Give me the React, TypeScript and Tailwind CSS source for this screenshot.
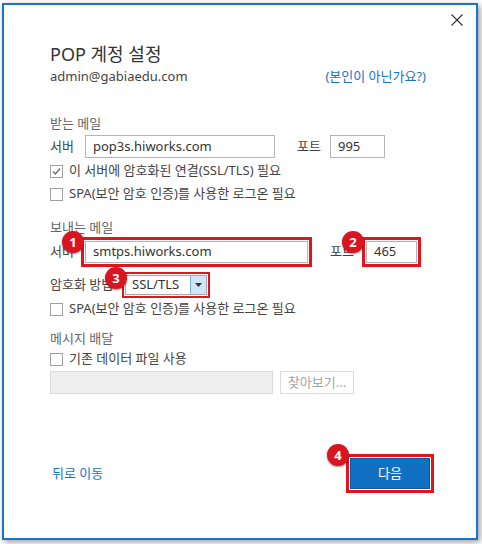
import React from 'react'

function Badge({ n, className }: { n: string; className: string }) {
  return (
    <span
      className={`absolute z-10 flex h-[22px] w-[22px] items-center justify-center rounded-full bg-[#d9161f] text-[13px] font-bold leading-none text-white shadow-[0_1px_2px_rgba(0,0,0,0.45)] ${className}`}
    >
      {n}
    </span>
  )
}

function Check({ checked, label }: { checked?: boolean; label: string }) {
  return (
    <div className="flex h-[20px] items-center">
      <span className="flex h-[13px] w-[13px] items-center justify-center border border-[#a0a0a0] bg-white">
        {checked && (
          <svg width="11" height="11" viewBox="0 0 11 11">
            <path d="M2 5.5 L4.5 8 L9 2.5" fill="none" stroke="#6b6b6b" strokeWidth="1.3" />
          </svg>
        )}
      </span>
      <span className="ml-[6px]">{label}</span>
    </div>
  )
}

export default function App() {
  return (
    <div className="h-[544px] w-[482px] bg-white pl-[2px] pt-[3px] font-['Noto_Sans','Noto_Sans_CJK_KR',sans-serif] text-[13px] text-[#444]">
      <div className="h-[537px] w-[476px] border-2 border-[#1a74cc] bg-white shadow-[2px_2px_6px_rgba(0,0,0,0.4)]">
        <div className="flex h-[37px] justify-end pr-[13px] pt-[9px]">
          <svg width="12" height="12" viewBox="0 0 12 12">
            <path d="M0.5 0.5 L11.5 11.5 M11.5 0.5 L0.5 11.5" stroke="#333" strokeWidth="1.1" />
          </svg>
        </div>

        <div className="pl-[46px] pr-[46px]">
          <div className="h-[24px] text-[18px] leading-[24px] text-[#333]">POP 계정 설정</div>
          <div className="mt-[1px] flex h-[20px] items-center justify-between">
            <span>admin@gabiaedu.com</span>
            <span className="mr-[4px] text-[#1a73c4]">(본인이 아닌가요?)</span>
          </div>

          <div className="mt-[27px] flex h-[20px] items-center text-[#666]">받는 메일</div>
          <div className="mt-[1px] flex h-[23px] items-center">
            <span className="w-[35px]">서버</span>
            <div className="flex h-[23px] w-[190px] items-center border border-[#b5b5b5] pl-[7px] text-[#333]">pop3s.hiworks.com</div>
            <span className="ml-[22px] w-[33px]">포트</span>
            <div className="flex h-[23px] w-[55px] items-center border border-[#b5b5b5] pl-[7px] text-[#333]">995</div>
          </div>
          <div className="mt-[3px]">
            <Check checked label="이 서버에 암호화된 연결(SSL/TLS) 필요" />
          </div>
          <div className="mt-[3px]">
            <Check label="SPA(보안 암호 인증)를 사용한 로그온 필요" />
          </div>

          <div className="mt-[14px] flex h-[20px] items-center text-[#666]">보내는 메일</div>
          <div className="mt-[3px] flex h-[22px] items-center">
            <span className="w-[35px]">서버</span>
            <div className="relative">
              <Badge n="1" className="-left-[23px] -top-[10px]" />
              <div className="flex h-[22px] w-[223px] items-center border border-[#b5b5b5] pl-[7px] text-[#333] outline-3 outline-offset-1 outline-[#e3141e]">
                smtps.hiworks.com
              </div>
            </div>
            <span className="ml-[22px] w-[36px]">포트</span>
            <div className="relative">
              <Badge n="2" className="-left-[24px] -top-[10px]" />
              <div className="flex h-[22px] w-[51px] items-center border border-[#b5b5b5] pl-[7px] text-[#333] outline-3 outline-offset-1 outline-[#e3141e]">
                465
              </div>
            </div>
          </div>

          <div className="mt-[12px] flex h-[20px] items-center">
            <span className="w-[75px]">암호화 방법</span>
            <div className="relative">
              <Badge n="3" className="-left-[20px] -top-[8px]" />
              <div className="flex h-[20px] w-[82px] items-center border border-[#a8a8a8] bg-white outline-2 outline-offset-1 outline-[#e3141e]">
                <span className="flex-1 pl-[6px] text-[#333]">SSL/TLS</span>
                <span className="flex h-full w-[16px] items-center justify-center border-l border-[#7bb1e8] bg-[#cfe5f8]">
                  <svg width="7" height="4" viewBox="0 0 7 4">
                    <path d="M0 0 L7 0 L3.5 4 Z" fill="#333" />
                  </svg>
                </span>
              </div>
            </div>
          </div>
          <div className="mt-[4px]">
            <Check label="SPA(보안 암호 인증)를 사용한 로그온 필요" />
          </div>

          <div className="mt-[10px] flex h-[20px] items-center text-[#666]">메시지 배달</div>
          <Check label="기존 데이터 파일 사용" />
          <div className="mt-[2px] flex h-[23px] items-center">
            <div className="h-[23px] w-[223px] border border-[#d9d9d9] bg-[#efefef]" />
            <div className="ml-[7px] flex h-[23px] w-[74px] items-center justify-center border border-[#dadada] text-[#a5a5a5]">
              찾아보기...
            </div>
          </div>

          <div className="mt-[64px] flex h-[31px] items-center justify-between">
            <span className="ml-[2px] text-[#1a73c4]">뒤로 이동</span>
            <div className="relative">
              <Badge n="4" className="-left-[23px] -top-[14px]" />
              <div className="flex h-[31px] w-[80px] items-center justify-center border border-[#0b5aa5] bg-[#1170c2] text-white outline-3 outline-offset-1 outline-[#e3141e]">
                다음
              </div>
            </div>
          </div>
        </div>
      </div>
    </div>
  )
}
